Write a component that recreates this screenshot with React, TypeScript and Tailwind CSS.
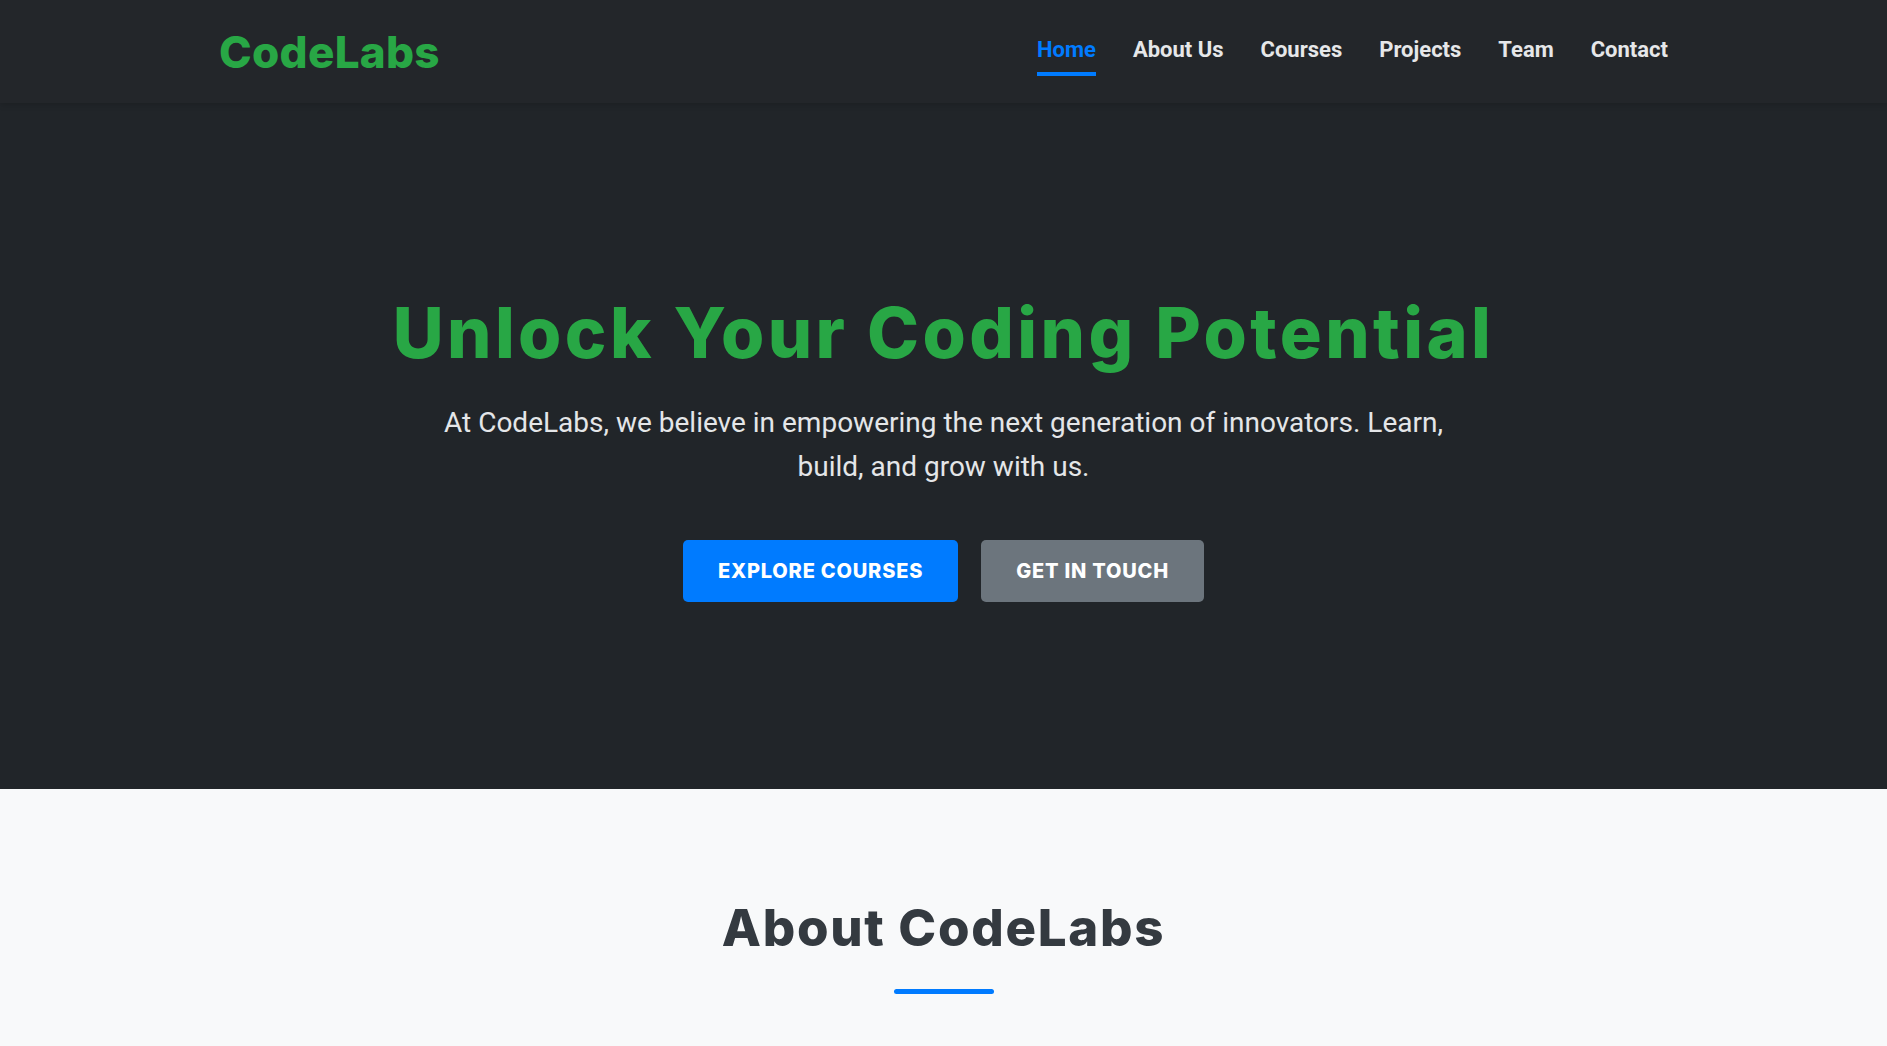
const navLinks = ["Home", "About Us", "Courses", "Projects", "Team", "Contact"];

const display = "font-['Inter','Liberation_Sans',sans-serif]";

function Header() {
  return (
    <header className="bg-[#23262a] h-[103px] shadow-[0_2px_6px_rgba(0,0,0,0.15)] relative z-10">
      <div className="max-w-[1449px] mx-auto h-full flex items-center justify-between">
        <a className={`${display} font-extrabold text-[44px] leading-none text-[#28a745] tracking-[0.3px]`}>
          CodeLabs
        </a>
        <nav className="flex gap-[37px] mt-[11px] font-['Roboto',sans-serif]">
          {navLinks.map((link, i) => (
            <a
              key={link}
              className={
                "text-[22px] leading-[24px] font-bold pb-[10px] border-b-4 " +
                (i === 0
                  ? "text-[#007bff] border-[#007bff]"
                  : "text-[#e6e7e9] border-transparent")
              }
            >
              {link}
            </a>
          ))}
        </nav>
      </div>
    </header>
  );
}

function Hero() {
  return (
    <section className="bg-[#212529] pt-[188px] pb-[187px] flex flex-col items-center text-center">
      <h1 className={`${display} font-extrabold text-[70px] leading-[84px] tracking-[3.4px] text-[#28a745]`}>
        Unlock Your Coding Potential
      </h1>
      <p className="mt-[26px] max-w-[1040px] font-['Roboto',sans-serif] text-[28px] leading-[44px] text-[#e4e6e8]">
        At CodeLabs, we believe in empowering the next generation of innovators. Learn, build, and grow with us.
      </p>
      <div className="mt-[51px] flex gap-[23px]">
        <button className={`${display} h-[62px] px-[35px] rounded-[5px] bg-[#007bff] text-white text-[20px] font-extrabold uppercase tracking-[0.8px]`}>
          Explore Courses
        </button>
        <button className={`${display} h-[62px] px-[35px] rounded-[5px] bg-[#6c757d] text-white text-[20px] font-extrabold uppercase tracking-[0.8px]`}>
          Get in Touch
        </button>
      </div>
    </section>
  );
}

function About() {
  return (
    <section className="bg-[#f8f9fa] pt-[108px] pb-[60px] flex flex-col items-center">
      <h2 className={`${display} font-extrabold text-[51px] leading-[62px] tracking-[1.7px] text-[#343a40]`}>
        About CodeLabs
      </h2>
      <div className="mt-[30px] w-[100px] h-[5px] rounded-full bg-[#007bff]" />
    </section>
  );
}

export default function App() {
  return (
    <div className="min-h-screen bg-[#f8f9fa]">
      <Header />
      <Hero />
      <About />
    </div>
  );
}
